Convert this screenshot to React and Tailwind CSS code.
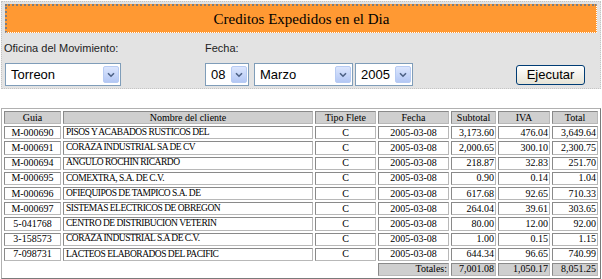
import React from "react";

const rows = [
  ["M-000690", "PISOS Y ACABADOS RUSTICOS DEL", "3,173.60", "476.04", "3,649.64"],
  ["M-000691", "CORAZA INDUSTRIAL SA DE CV", "2,000.65", "300.10", "2,300.75"],
  ["M-000694", "ANGULO ROCHIN RICARDO", "218.87", "32.83", "251.70"],
  ["M-000695", "COMEXTRA, S.A. DE C.V.", "0.90", "0.14", "1.04"],
  ["M-000696", "OFIEQUIPOS DE TAMPICO S.A. DE", "617.68", "92.65", "710.33"],
  ["M-000697", "SISTEMAS ELECTRICOS DE OBREGON", "264.04", "39.61", "303.65"],
  ["5-041768", "CENTRO DE DISTRIBUCION VETERIN", "80.00", "12.00", "92.00"],
  ["3-158573", "CORAZA INDUSTRIAL S.A DE C.V.", "1.00", "0.15", "1.15"],
  ["7-098731", "LACTEOS ELABORADOS DEL PACIFIC", "644.34", "96.65", "740.99"],
];

function Select({ value, width }) {
  return (
    <div
      className={`${width} h-[23px] flex items-center justify-between bg-white border border-[#7f9db9]`}
    >
      <span className="pl-[5px] text-[13px] leading-none text-black">{value}</span>
      <div className="mr-[1px] w-[16px] h-[17px] flex items-center justify-center rounded-[2px] border border-[#b7cbf3] bg-gradient-to-b from-[#dce6fd] to-[#b3c7f4]">
        <svg width="8" height="6" viewBox="0 0 8 6">
          <path d="M1 1.2 L4 4.2 L7 1.2" fill="none" stroke="#4d6185" strokeWidth="1.6" />
        </svg>
      </div>
    </div>
  );
}

const cell = "border border-t-[#8a8a8a] border-l-[#8a8a8a] border-b-[#b8b8b8] border-r-[#b8b8b8] flex items-center leading-none";
const head = `${cell} justify-center bg-[#cfcfcf]`;

export default function App() {
  return (
    <div className="w-[602px] h-[279px] overflow-hidden bg-white">
      <div className="ml-[1px] mt-[1px] w-[600px] h-[88px] bg-[#e3e3e3] border border-dotted border-[#c4c4c4] font-['Liberation_Sans',Arial,sans-serif]">
        <div className="ml-[3px] mt-[2px] w-[592px] h-[29px] bg-[#ff9933] border-t-2 border-l-2 border-t-[#7d7d7d] border-l-[#7d7d7d] border-b border-r border-dotted border-b-white border-r-white flex items-center justify-center">
          <span className="font-['Liberation_Serif','Times_New_Roman',serif] text-[15px] leading-none text-black">
            Creditos Expedidos en el Dia
          </span>
        </div>
        <div className="flex mt-[9px] text-[11px] leading-[13px] text-[#222]">
          <div className="w-[203px] pl-[2px]">Oficina del Movimiento:</div>
          <div>Fecha:</div>
        </div>
        <div className="flex items-center mt-[8px]">
          <div className="w-[203px] pl-[3px]">
            <Select value="Torreon" width="w-[116px]" />
          </div>
          <Select value="08" width="w-[44px]" />
          <div className="ml-[5px]">
            <Select value="Marzo" width="w-[99px]" />
          </div>
          <div className="ml-[2px]">
            <Select value="2005" width="w-[58px]" />
          </div>
          <button className="ml-[103px] w-[69px] h-[20px] rounded-[3px] border border-[#003c74] bg-gradient-to-b from-white to-[#e6e3d6] text-[13px] leading-none text-black flex items-center justify-center">
            Ejecutar
          </button>
        </div>
      </div>

      <div className="ml-[1px] mt-[19px] w-[600px] border border-t-[#b0b0b0] border-l-[#b0b0b0] border-b-[#7a7a7a] border-r-[#7a7a7a] p-[2px] grid grid-cols-[57px_250px_61px_71px_45px_52px_46px] auto-rows-[13.2px] gap-[2px] font-['Liberation_Serif','Times_New_Roman',serif] text-[10px] text-black">
        <div className={head}>Guia</div>
        <div className={head}>Nombre del cliente</div>
        <div className={head}>Tipo Flete</div>
        <div className={head}>Fecha</div>
        <div className={head}>Subtotal</div>
        <div className={head}>IVA</div>
        <div className={head}>Total</div>
        {rows.map((r) => (
          <React.Fragment key={r[0]}>
            <div className={`${cell} justify-center`}>{r[0]}</div>
            <div className={`${cell} pl-[2px] text-[9.5px] tracking-[-0.5px] whitespace-nowrap`}>{r[1]}</div>
            <div className={`${cell} justify-center`}>C</div>
            <div className={`${cell} justify-center`}>2005-03-08</div>
            <div className={`${cell} justify-end pr-[1px]`}>{r[2]}</div>
            <div className={`${cell} justify-end pr-[1px]`}>{r[3]}</div>
            <div className={`${cell} justify-end pr-[1px]`}>{r[4]}</div>
          </React.Fragment>
        ))}
        <div className="col-span-3"></div>
        <div className={`${cell} justify-end pr-[1px] bg-[#cfcfcf]`}>Totales:</div>
        <div className={`${cell} justify-end pr-[1px] bg-[#cfcfcf]`}>7,001.08</div>
        <div className={`${cell} justify-end pr-[1px] bg-[#cfcfcf]`}>1,050.17</div>
        <div className={`${cell} justify-end pr-[1px] bg-[#cfcfcf]`}>8,051.25</div>
      </div>
    </div>
  );
}
